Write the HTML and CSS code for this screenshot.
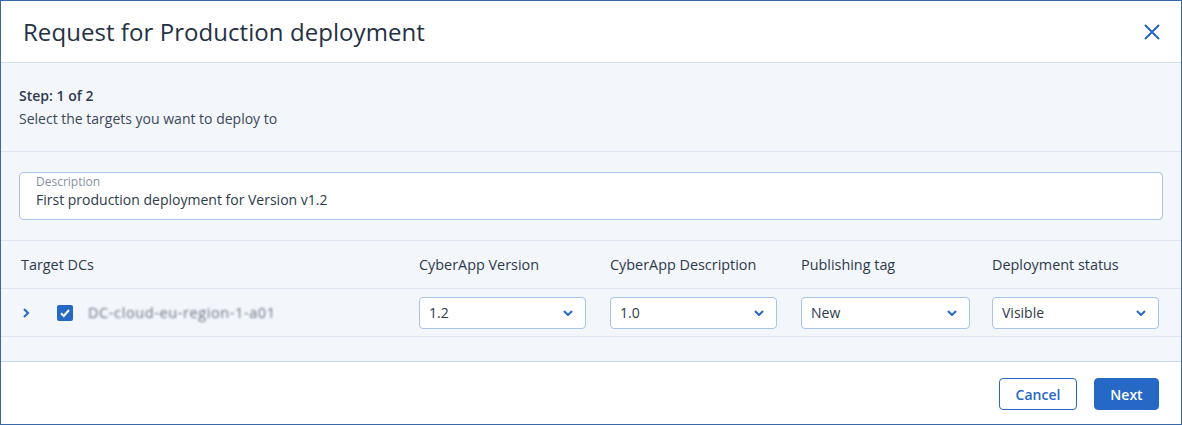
FILE: index.html
```html
<!DOCTYPE html>
<html lang="en">
<head>
<meta charset="utf-8">
<title>Request for Production deployment</title>
<link rel="stylesheet" href="styles.css">
</head>
<body>
<div class="dialog">
  <header class="dlg-header">
    <h1 class="dlg-title">Request for Production deployment</h1>
    <button class="close-btn" aria-label="Close">
      <svg width="18" height="18" viewBox="0 0 18 18"><path d="M2 2 L16 16 M16 2 L2 16" stroke="#2668c5" stroke-width="2" fill="none"/></svg>
    </button>
  </header>
  <div class="dlg-body">
    <section class="step">
      <div class="step-title">Step: 1 of 2</div>
      <div class="step-sub">Select the targets you want to deploy to</div>
    </section>
    <section class="desc-section">
      <div class="field">
        <div class="field-label">Description</div>
        <div class="field-value">First production deployment for Version v1.2</div>
      </div>
    </section>
    <div class="table">
      <div class="trow thead">
        <div class="cell first">Target DCs</div>
        <div class="cell">CyberApp Version</div>
        <div class="cell">CyberApp Description</div>
        <div class="cell">Publishing tag</div>
        <div class="cell">Deployment status</div>
      </div>
      <div class="trow tdata">
        <div class="cell first">
          <svg class="expander" width="8" height="12" viewBox="0 0 8 12"><path d="M2 2 L6 6 L2 10" stroke="#2668c5" stroke-width="2" fill="none"/></svg>
          <span class="checkbox"><svg width="16" height="16" viewBox="0 0 16 16"><path d="M4 8.2 L6.8 11 L12 5" stroke="#fff" stroke-width="2" fill="none"/></svg></span>
          <span class="blurred">DC-cloud-eu-region-1-a01</span>
        </div>
        <div class="cell"><div class="select w166"><span>1.2</span><svg width="10" height="6" viewBox="0 0 10 6"><path d="M1 1 L5 5 L9 1" stroke="#2668c5" stroke-width="2" fill="none"/></svg></div></div>
        <div class="cell"><div class="select w166"><span>1.0</span><svg width="10" height="6" viewBox="0 0 10 6"><path d="M1 1 L5 5 L9 1" stroke="#2668c5" stroke-width="2" fill="none"/></svg></div></div>
        <div class="cell"><div class="select w168"><span>New</span><svg width="10" height="6" viewBox="0 0 10 6"><path d="M1 1 L5 5 L9 1" stroke="#2668c5" stroke-width="2" fill="none"/></svg></div></div>
        <div class="cell"><div class="select w166"><span>Visible</span><svg width="10" height="6" viewBox="0 0 10 6"><path d="M1 1 L5 5 L9 1" stroke="#2668c5" stroke-width="2" fill="none"/></svg></div></div>
      </div>
    </div>
  </div>
  <footer class="dlg-footer">
    <button class="btn btn-secondary">Cancel</button>
    <button class="btn btn-primary">Next</button>
  </footer>
</div>
</body>
</html>
```
FILE: styles.css
```css
* { box-sizing: border-box; }
html, body { margin: 0; padding: 0; }
body {
  font-family: "Open Sans", "Noto Sans", sans-serif;
  color: #243143;
  background: #fff;
}
.dialog {
  width: 1182px;
  height: 425px;
  border: 1px solid #3a67a6;
  display: flex;
  flex-direction: column;
  background: #f3f6fb;
}
.dlg-header {
  height: 62px;
  flex: none;
  background: #fff;
  border-bottom: 1px solid #d3e1f4;
  display: flex;
  align-items: center;
  justify-content: space-between;
  padding: 0 20px 0 22px;
}
.dlg-title {
  margin: 0;
  font-size: 24px;
  font-weight: 400;
  color: #243143;
  letter-spacing: 0.06px;
}
.close-btn {
  border: 0;
  background: none;
  padding: 0;
  width: 18px;
  height: 18px;
  display: flex;
}
.dlg-body {
  flex: 1;
  display: flex;
  flex-direction: column;
}
.step {
  padding: 23px 18px 22px;
  border-bottom: 1px solid #dde6f1;
  font-size: 14px;
  line-height: 20px;
}
.step-title { font-weight: 600; color: #2d3a4b; }
.step-sub { margin-top: 3px; color: #3b4858; }
.desc-section {
  padding: 20px 18px 20px 18px;
  border-bottom: 1px solid #dde6f1;
}
.field {
  background: #fff;
  border: 1px solid #a9c4ea;
  border-radius: 4px;
  height: 48px;
  padding: 1px 16px 0;
}
.field-label { font-size: 12px; line-height: 16px; color: #8591a1; }
.field-value { font-size: 14px; line-height: 20px; color: #2d3a4b; }
.table { display: flex; flex-direction: column; }
.trow {
  display: grid;
  grid-template-columns: 418px 191px 191px 191px 1fr;
  height: 48px;
  border-bottom: 1px solid #dde6f1;
  align-items: center;
}
.thead .cell { font-size: 14.4px; color: #2d3a4b; }
.cell.first { padding-left: 20px; display: flex; align-items: center; }
.tdata .cell.first { padding-left: 21px; }
.expander { margin-right: 27px; }
.checkbox {
  width: 16px;
  height: 16px;
  background: #2668c5;
  border-radius: 2px;
  display: inline-flex;
  margin-right: 15px;
}
.blurred {
  font-size: 14.5px;
  color: #6f7884;
  filter: blur(1.3px);
  letter-spacing: 0.6px;
}
.select {
  height: 32px;
  background: #fff;
  border: 1px solid #a9c4ea;
  border-radius: 4px;
  display: flex;
  align-items: center;
  justify-content: space-between;
  padding: 0 12px 0 9px;
  font-size: 14px;
  color: #2d3a4b;
}
.w166 { width: 167px; }
.w168 { width: 169px; }
.dlg-footer {
  flex: none;
  height: 63px;
  background: #fff;
  border-top: 1px solid #c9daf2;
  display: flex;
  justify-content: flex-end;
  align-items: flex-start;
  gap: 17px;
  padding: 16px 22px 0 0;
}
.btn {
  height: 32px;
  border-radius: 4px;
  font-family: inherit;
  font-size: 14px;
  font-weight: 600;
  padding: 0;
}
.btn-secondary {
  width: 78px;
  background: #fff;
  border: 1px solid #2668c5;
  color: #2668c5;
}
.btn-primary {
  width: 65px;
  background: #2668c5;
  border: 1px solid #2668c5;
  color: #fff;
}
```
